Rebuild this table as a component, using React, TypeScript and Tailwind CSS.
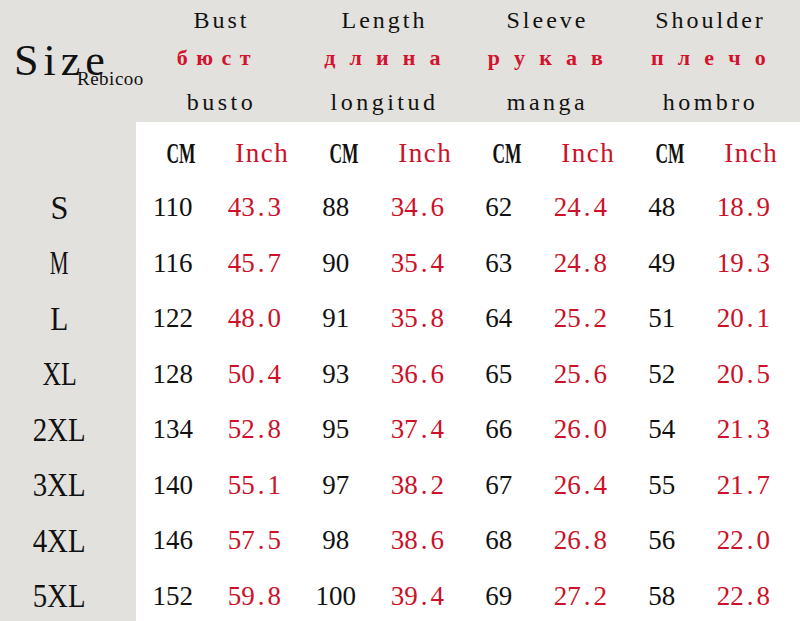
import React from "react";

const rows: { label: string; scale: string; v: string[] }[] = [
  { label: "S", scale: "scale-x-[0.95]", v: ["110", "43.3", "88", "34.6", "62", "24.4", "48", "18.9"] },
  { label: "M", scale: "scale-x-[0.62]", v: ["116", "45.7", "90", "35.4", "63", "24.8", "49", "19.3"] },
  { label: "L", scale: "scale-x-[0.87]", v: ["122", "48.0", "91", "35.8", "64", "25.2", "51", "20.1"] },
  { label: "XL", scale: "scale-x-[0.76]", v: ["128", "50.4", "93", "36.6", "65", "25.6", "52", "20.5"] },
  { label: "2XL", scale: "scale-x-[0.85]", v: ["134", "52.8", "95", "37.4", "66", "26.0", "54", "21.3"] },
  { label: "3XL", scale: "scale-x-[0.85]", v: ["140", "55.1", "97", "38.2", "67", "26.4", "55", "21.7"] },
  { label: "4XL", scale: "scale-x-[0.85]", v: ["146", "57.5", "98", "38.6", "68", "26.8", "56", "22.0"] },
  { label: "5XL", scale: "scale-x-[0.85]", v: ["152", "59.8", "100", "39.4", "69", "27.2", "58", "22.8"] },
];

const groups = [
  { en: "Bust", ru: "б ю с т", ruCls: "tracking-[1.5px] pr-[14px]", es: "busto" },
  { en: "Length", ru: "д л и н а", ruCls: "tracking-[4.3px]", es: "longitud" },
  { en: "Sleeve", ru: "р у к а в", ruCls: "tracking-[4.3px]", es: "manga" },
  { en: "Shoulder", ru: "п л е ч о", ruCls: "tracking-[4.3px]", es: "hombro" },
];

function RedNum({ value }: { value: string }) {
  const [a, b] = value.split(".");
  return (
    <span className="text-[#cc1128]">
      {a}
      <span className="px-[3px]">.</span>
      {b}
    </span>
  );
}

export default function App() {
  return (
    <div className="w-[800px] h-[621px] overflow-hidden bg-[#e2e1dd] font-['Liberation_Serif',serif] text-[#111]">
      {/* Header */}
      <div className="flex h-[122px]">
        <div className="relative w-[140px] shrink-0">
          <div className="pt-[39px] pl-[14px] text-[44px] leading-none tracking-[5px]">Size</div>
          <div className="absolute left-[77px] top-[69px] text-[19px] leading-none tracking-[0.5px]">Rebicoo</div>
        </div>
        <div className="grid grid-cols-[repeat(4,163px)]">
          {groups.map((g) => (
            <div key={g.en} className="flex flex-col items-center">
              <div className="mt-[8px] h-[24px] text-[24px] leading-none tracking-[3px]">{g.en}</div>
              <div className={`mt-[15px] h-[22px] whitespace-pre text-[22px] font-bold leading-none text-[#d3122e] ${g.ruCls}`}>
                {g.ru}
              </div>
              <div className="mt-[21px] h-[24px] text-[24px] leading-none tracking-[3.5px]">{g.es}</div>
            </div>
          ))}
        </div>
      </div>

      {/* Body */}
      <div className="flex">
        <div className="w-[136px] shrink-0">
          <div className="h-[58px]" />
          {rows.map((r) => (
            <div key={r.label} className="flex h-[55.5px] items-center justify-center pr-[17px]">
              <span className={`inline-block text-[34px] leading-none ${r.scale}`}>{r.label}</span>
            </div>
          ))}
        </div>
        <div className="flex-1 bg-white">
          <div className="ml-[4px] grid h-[58px] grid-cols-[repeat(8,81.5px)] items-center pt-[4px]">
            {[0, 1, 2, 3].map((i) => (
              <React.Fragment key={i}>
                <div className="flex justify-center">
                  <span className="inline-block scale-x-[0.58] text-[30px] font-bold leading-none">CM</span>
                </div>
                <div className="flex justify-center text-[27px] leading-none tracking-[1.5px] text-[#cc1128]">Inch</div>
              </React.Fragment>
            ))}
          </div>
          {rows.map((r) => (
            <div key={r.label} className="-ml-[4px] grid h-[55.5px] grid-cols-[repeat(8,81.5px)] items-center">
              {r.v.map((val, i) => (
                <div key={i} className="flex justify-center text-[27px] leading-none">
                  {i % 2 === 1 ? <RedNum value={val} /> : <span>{val}</span>}
                </div>
              ))}
            </div>
          ))}
        </div>
      </div>
    </div>
  );
}
